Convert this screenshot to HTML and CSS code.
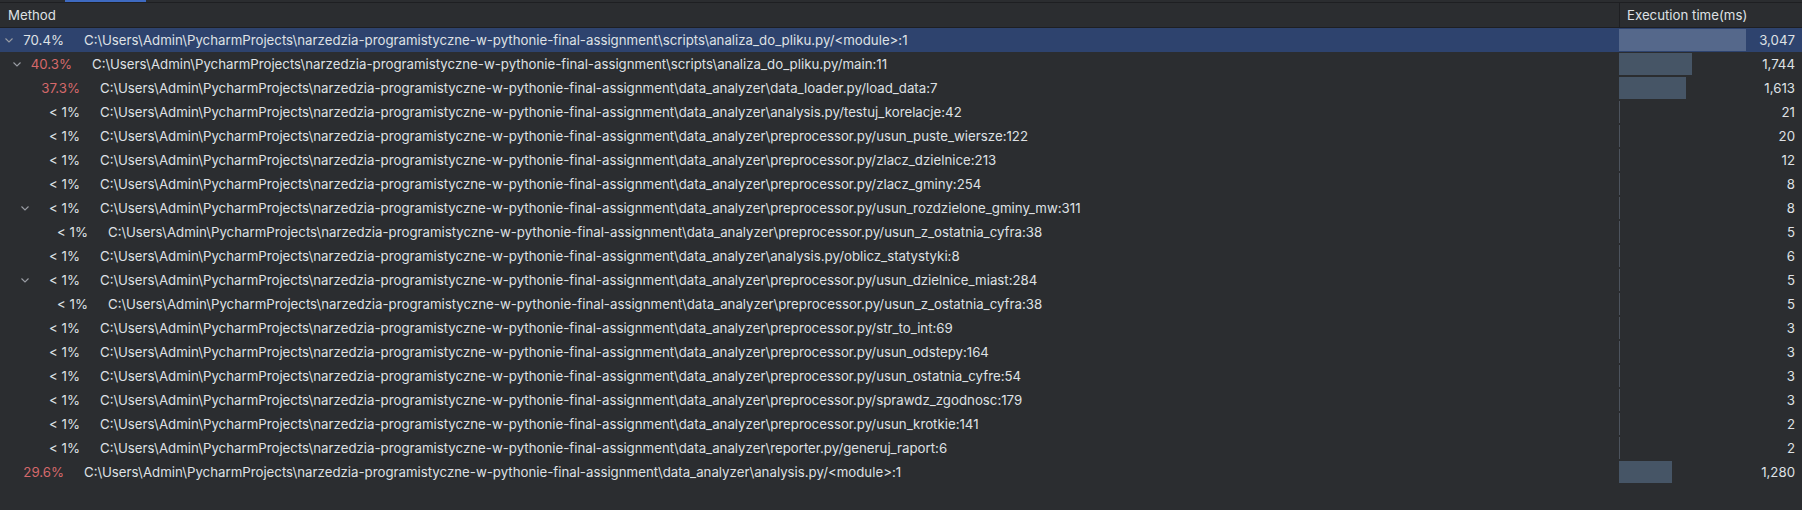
FILE: index.html
```html
<!DOCTYPE html>
<html>
<head>
<meta charset="utf-8">
<link rel="stylesheet" href="styles.css">
</head>
<body>
<div class="topstrip"><div class="tab-indicator"></div></div>
<div class="table">
  <div class="row header">
    <div class="cell method-h">Method</div>
    <div class="cell time-h">Execution time(ms)</div>
  </div>

  <div class="row selected">
    <div class="cell method lvl0"><span class="chev"><svg width="8" height="5" viewBox="0 0 8 5"><polyline points="0.5,0.5 4,4 7.5,0.5"/></svg></span><span class="pct">70.4%</span><span class="path">C:\Users\Admin\PycharmProjects\narzedzia-programistyczne-w-pythonie-final-assignment\scripts\analiza_do_pliku.py/&lt;module&gt;:1</span></div>
    <div class="cell time"><div class="bar" style="width:127px"></div><span class="val">3,047</span></div>
  </div>

  <div class="row">
    <div class="cell method lvl1"><span class="chev"><svg width="8" height="5" viewBox="0 0 8 5"><polyline points="0.5,0.5 4,4 7.5,0.5"/></svg></span><span class="pct hot">40.3%</span><span class="path">C:\Users\Admin\PycharmProjects\narzedzia-programistyczne-w-pythonie-final-assignment\scripts\analiza_do_pliku.py/main:11</span></div>
    <div class="cell time"><div class="bar" style="width:73px"></div><span class="val">1,744</span></div>
  </div>

  <div class="row">
    <div class="cell method lvl2"><span class="chev"></span><span class="pct hot">37.3%</span><span class="path">C:\Users\Admin\PycharmProjects\narzedzia-programistyczne-w-pythonie-final-assignment\data_analyzer\data_loader.py/load_data:7</span></div>
    <div class="cell time"><div class="bar" style="width:67px"></div><span class="val">1,613</span></div>
  </div>

  <div class="row">
    <div class="cell method lvl2"><span class="chev"></span><span class="pct">&lt; 1%</span><span class="path">C:\Users\Admin\PycharmProjects\narzedzia-programistyczne-w-pythonie-final-assignment\data_analyzer\analysis.py/testuj_korelacje:42</span></div>
    <div class="cell time"><div class="bar thin"></div><span class="val">21</span></div>
  </div>

  <div class="row">
    <div class="cell method lvl2"><span class="chev"></span><span class="pct">&lt; 1%</span><span class="path">C:\Users\Admin\PycharmProjects\narzedzia-programistyczne-w-pythonie-final-assignment\data_analyzer\preprocessor.py/usun_puste_wiersze:122</span></div>
    <div class="cell time"><div class="bar thin"></div><span class="val">20</span></div>
  </div>

  <div class="row">
    <div class="cell method lvl2"><span class="chev"></span><span class="pct">&lt; 1%</span><span class="path">C:\Users\Admin\PycharmProjects\narzedzia-programistyczne-w-pythonie-final-assignment\data_analyzer\preprocessor.py/zlacz_dzielnice:213</span></div>
    <div class="cell time"><div class="bar thin"></div><span class="val">12</span></div>
  </div>

  <div class="row">
    <div class="cell method lvl2"><span class="chev"></span><span class="pct">&lt; 1%</span><span class="path">C:\Users\Admin\PycharmProjects\narzedzia-programistyczne-w-pythonie-final-assignment\data_analyzer\preprocessor.py/zlacz_gminy:254</span></div>
    <div class="cell time"><div class="bar thin"></div><span class="val">8</span></div>
  </div>

  <div class="row">
    <div class="cell method lvl2"><span class="chev"><svg width="8" height="5" viewBox="0 0 8 5"><polyline points="0.5,0.5 4,4 7.5,0.5"/></svg></span><span class="pct">&lt; 1%</span><span class="path">C:\Users\Admin\PycharmProjects\narzedzia-programistyczne-w-pythonie-final-assignment\data_analyzer\preprocessor.py/usun_rozdzielone_gminy_mw:311</span></div>
    <div class="cell time"><div class="bar thin"></div><span class="val">8</span></div>
  </div>

  <div class="row">
    <div class="cell method lvl3"><span class="chev"></span><span class="pct">&lt; 1%</span><span class="path">C:\Users\Admin\PycharmProjects\narzedzia-programistyczne-w-pythonie-final-assignment\data_analyzer\preprocessor.py/usun_z_ostatnia_cyfra:38</span></div>
    <div class="cell time"><div class="bar thin"></div><span class="val">5</span></div>
  </div>

  <div class="row">
    <div class="cell method lvl2"><span class="chev"></span><span class="pct">&lt; 1%</span><span class="path">C:\Users\Admin\PycharmProjects\narzedzia-programistyczne-w-pythonie-final-assignment\data_analyzer\analysis.py/oblicz_statystyki:8</span></div>
    <div class="cell time"><div class="bar thin"></div><span class="val">6</span></div>
  </div>

  <div class="row">
    <div class="cell method lvl2"><span class="chev"><svg width="8" height="5" viewBox="0 0 8 5"><polyline points="0.5,0.5 4,4 7.5,0.5"/></svg></span><span class="pct">&lt; 1%</span><span class="path">C:\Users\Admin\PycharmProjects\narzedzia-programistyczne-w-pythonie-final-assignment\data_analyzer\preprocessor.py/usun_dzielnice_miast:284</span></div>
    <div class="cell time"><div class="bar thin"></div><span class="val">5</span></div>
  </div>

  <div class="row">
    <div class="cell method lvl3"><span class="chev"></span><span class="pct">&lt; 1%</span><span class="path">C:\Users\Admin\PycharmProjects\narzedzia-programistyczne-w-pythonie-final-assignment\data_analyzer\preprocessor.py/usun_z_ostatnia_cyfra:38</span></div>
    <div class="cell time"><div class="bar thin"></div><span class="val">5</span></div>
  </div>

  <div class="row">
    <div class="cell method lvl2"><span class="chev"></span><span class="pct">&lt; 1%</span><span class="path">C:\Users\Admin\PycharmProjects\narzedzia-programistyczne-w-pythonie-final-assignment\data_analyzer\preprocessor.py/str_to_int:69</span></div>
    <div class="cell time"><div class="bar thin"></div><span class="val">3</span></div>
  </div>

  <div class="row">
    <div class="cell method lvl2"><span class="chev"></span><span class="pct">&lt; 1%</span><span class="path">C:\Users\Admin\PycharmProjects\narzedzia-programistyczne-w-pythonie-final-assignment\data_analyzer\preprocessor.py/usun_odstepy:164</span></div>
    <div class="cell time"><div class="bar thin"></div><span class="val">3</span></div>
  </div>

  <div class="row">
    <div class="cell method lvl2"><span class="chev"></span><span class="pct">&lt; 1%</span><span class="path">C:\Users\Admin\PycharmProjects\narzedzia-programistyczne-w-pythonie-final-assignment\data_analyzer\preprocessor.py/usun_ostatnia_cyfre:54</span></div>
    <div class="cell time"><div class="bar thin"></div><span class="val">3</span></div>
  </div>

  <div class="row">
    <div class="cell method lvl2"><span class="chev"></span><span class="pct">&lt; 1%</span><span class="path">C:\Users\Admin\PycharmProjects\narzedzia-programistyczne-w-pythonie-final-assignment\data_analyzer\preprocessor.py/sprawdz_zgodnosc:179</span></div>
    <div class="cell time"><div class="bar thin"></div><span class="val">3</span></div>
  </div>

  <div class="row">
    <div class="cell method lvl2"><span class="chev"></span><span class="pct">&lt; 1%</span><span class="path">C:\Users\Admin\PycharmProjects\narzedzia-programistyczne-w-pythonie-final-assignment\data_analyzer\preprocessor.py/usun_krotkie:141</span></div>
    <div class="cell time"><div class="bar thin"></div><span class="val">2</span></div>
  </div>

  <div class="row">
    <div class="cell method lvl2"><span class="chev"></span><span class="pct">&lt; 1%</span><span class="path">C:\Users\Admin\PycharmProjects\narzedzia-programistyczne-w-pythonie-final-assignment\data_analyzer\reporter.py/generuj_raport:6</span></div>
    <div class="cell time"><div class="bar thin"></div><span class="val">2</span></div>
  </div>

  <div class="row">
    <div class="cell method lvl0"><span class="chev"></span><span class="pct hot">29.6%</span><span class="path">C:\Users\Admin\PycharmProjects\narzedzia-programistyczne-w-pythonie-final-assignment\data_analyzer\analysis.py/&lt;module&gt;:1</span></div>
    <div class="cell time"><div class="bar" style="width:53px"></div><span class="val">1,280</span></div>
  </div>
</div>
</body>
</html>
```

FILE: styles.css
```css
html, body {
  margin: 0;
  padding: 0;
  background: #2b2d30;
  height: 100%;
}
body {
  font-family: Inter, "Noto Sans", sans-serif;
  font-size: 13.25px;
  color: #dfe1e5;
  overflow: hidden;
}
.topstrip {
  height: 2px;
  border-bottom: 1px solid #1e1f22;
}
.tab-indicator {
  margin-left: 65px;
  width: 81px;
  height: 2px;
  background: #3e6ac1;
}
.table {
  display: flex;
  flex-direction: column;
}
.row {
  display: grid;
  grid-template-columns: 1619px 1fr;
  height: 24px;
}
.row.header {
  border-bottom: 1px solid #1e1f22;
}
.cell {
  display: flex;
  align-items: center;
  white-space: nowrap;
  overflow: hidden;
}
.method-h {
  padding-left: 8px;
  color: #dfe1e5;
}
.time-h {
  border-left: 1px solid #1e1f22;
  padding-left: 7px;
}
.row.selected {
  background: #2e436e;
}
.method {
  padding-left: 4px;
}
.lvl1 { padding-left: 12px; }
.lvl2 { padding-left: 20px; }
.lvl3 { padding-left: 28px; }
.chev {
  width: 9px;
  flex: none;
  display: flex;
  align-items: center;
  padding-left: 1px;
  box-sizing: border-box;
}
.chev svg {
  display: block;
  fill: none;
  stroke: #9a9da4;
  stroke-width: 1.1;
}
.pct {
  width: 51px;
  flex: none;
  text-align: right;
}
.pct.hot {
  color: #d5696b;
}
.path {
  margin-left: 20px;
}
.time {
  display: grid;
  align-items: stretch;
}
.time > * {
  grid-area: 1 / 1;
}
.bar {
  margin: 1px 0;
  background: #465566;
  justify-self: start;
}
.selected .bar {
  background: #55688b;
}
.bar.thin {
  width: 1px;
  background: #4c535d;
}
.val {
  justify-self: end;
  align-self: center;
  padding-right: 7px;
}
```
